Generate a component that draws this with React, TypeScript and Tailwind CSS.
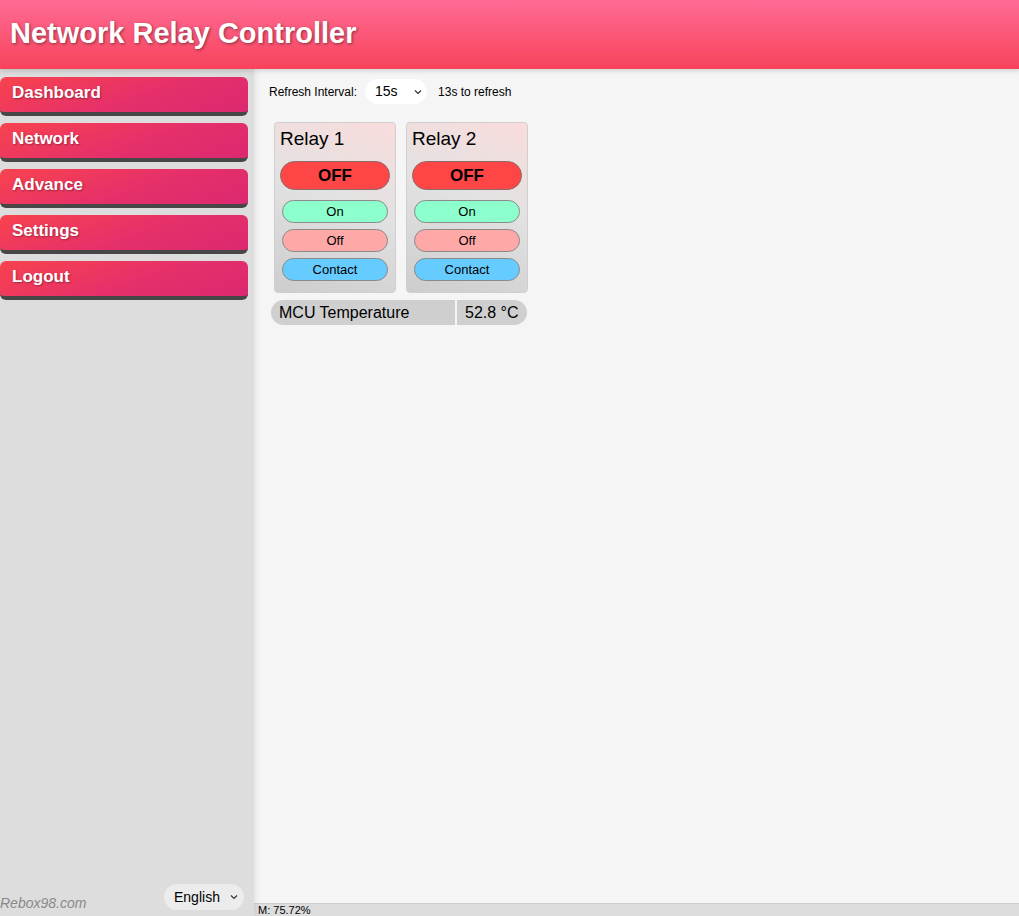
import React from "react";

const navItems = ["Dashboard", "Network", "Advance", "Settings", "Logout"];

function Chevron() {
  return (
    <svg width="8" height="6" viewBox="0 0 8 6" className="ml-auto">
      <path d="M1 1.5 L4 4.5 L7 1.5" fill="none" stroke="#333" strokeWidth="1.2" />
    </svg>
  );
}

function RelayCard({ name }: { name: string }) {
  return (
    <div className="w-[122px] h-[171px] rounded-[4px] border border-[#cfcfcf] bg-[linear-gradient(200deg,#fadcdc_0%,#e2e2e2_45%,#cdcdcd_100%)] px-[5px] pt-[4px]">
      <div className="text-[19px] leading-[24px] text-black">{name}</div>
      <button className="mt-[10px] w-[110px] h-[29px] rounded-full border border-[#8a6a6a] bg-[#ff4646] text-[17px] font-bold text-black">
        OFF
      </button>
      <div className="flex flex-col items-center gap-[6px] mt-[10px]">
        <button className="w-[106px] h-[23px] rounded-full border border-[#8a8a8a] bg-[#8cffcc] text-[13px] text-black">On</button>
        <button className="w-[106px] h-[23px] rounded-full border border-[#8a8a8a] bg-[#ffa8a8] text-[13px] text-black">Off</button>
        <button className="w-[106px] h-[23px] rounded-full border border-[#8a8a8a] bg-[#66ccff] text-[13px] text-black">Contact</button>
      </div>
    </div>
  );
}

export default function App() {
  return (
    <div className="h-[916px] w-full flex flex-col bg-[#f5f5f5] font-['Liberation_Sans',Arial,sans-serif] overflow-hidden">
      <header className="relative z-10 h-[69px] shrink-0 bg-[linear-gradient(180deg,#ff6b95_0%,#f7435a_100%)] shadow-[0_2px_5px_rgba(0,0,0,0.15)] flex items-center px-[10px]">
        <h1 className="text-[29px] font-bold text-white [text-shadow:1px_1px_3px_rgba(0,0,0,0.45)] mt-[-2px]">
          Network Relay Controller
        </h1>
      </header>

      <div className="flex flex-1 min-h-0">
        <aside className="relative z-[5] w-[254px] shrink-0 bg-[#dddddd] shadow-[2px_0_6px_rgba(0,0,0,0.08)] flex flex-col">
          <nav className="flex flex-col gap-[7px] pt-[8px] pr-[6px]">
            {navItems.map((item) => (
              <div
                key={item}
                className="h-[39px] rounded-[6px] bg-[linear-gradient(160deg,#f8434e_0%,#e6306a_55%,#dc2870_100%)] border-b-[4px] border-[#474747] flex items-center pl-[12px] pb-[3px]"
              >
                <span className="text-[17px] font-bold text-white [text-shadow:1px_1px_2px_rgba(0,0,0,0.35)]">
                  {item}
                </span>
              </div>
            ))}
          </nav>
          <div className="mt-auto flex items-end justify-between pr-[10px] pb-[3px]">
            <span className="text-[14px] italic text-[#8a8a8a] mb-[-1px]">Rebox98.com</span>
            <div className="mb-[3px] w-[80px] h-[26px] rounded-full bg-[#ececec] flex items-center pl-[10px] pr-[6px] text-[14px] text-black">
              English
              <Chevron />
            </div>
          </div>
        </aside>

        <main className="flex-1 flex flex-col min-w-0">
          <div className="flex-1 pl-[15px] pt-[10px]">
            <div className="flex items-center h-[25px] text-[12px] text-black">
              <span>Refresh Interval:</span>
              <div className="ml-[8px] w-[62px] h-[25px] rounded-full bg-white flex items-center pl-[10px] pr-[5px] text-[14px]">
                15s
                <Chevron />
              </div>
              <span className="ml-[11px]">13s to refresh</span>
            </div>

            <div className="flex gap-[10px] mt-[18px] ml-[5px]">
              <RelayCard name="Relay 1" />
              <RelayCard name="Relay 2" />
            </div>

            <div className="flex mt-[7px] ml-[2px] h-[25px] text-[16px] text-black">
              <div className="w-[184px] rounded-l-full bg-[#cfcfcf] flex items-center pl-[8px]">MCU Temperature</div>
              <div className="w-[2px]" />
              <div className="w-[70px] rounded-r-full bg-[#cfcfcf] flex items-center pl-[8px]">52.8 °C</div>
            </div>
          </div>

          <div className="h-[13px] shrink-0 bg-[#dddddd] border-t border-[#cccccc] pl-[4px] text-[11px] leading-[12px] text-black">
            M: 75.72%
          </div>
        </main>
      </div>
    </div>
  );
}
